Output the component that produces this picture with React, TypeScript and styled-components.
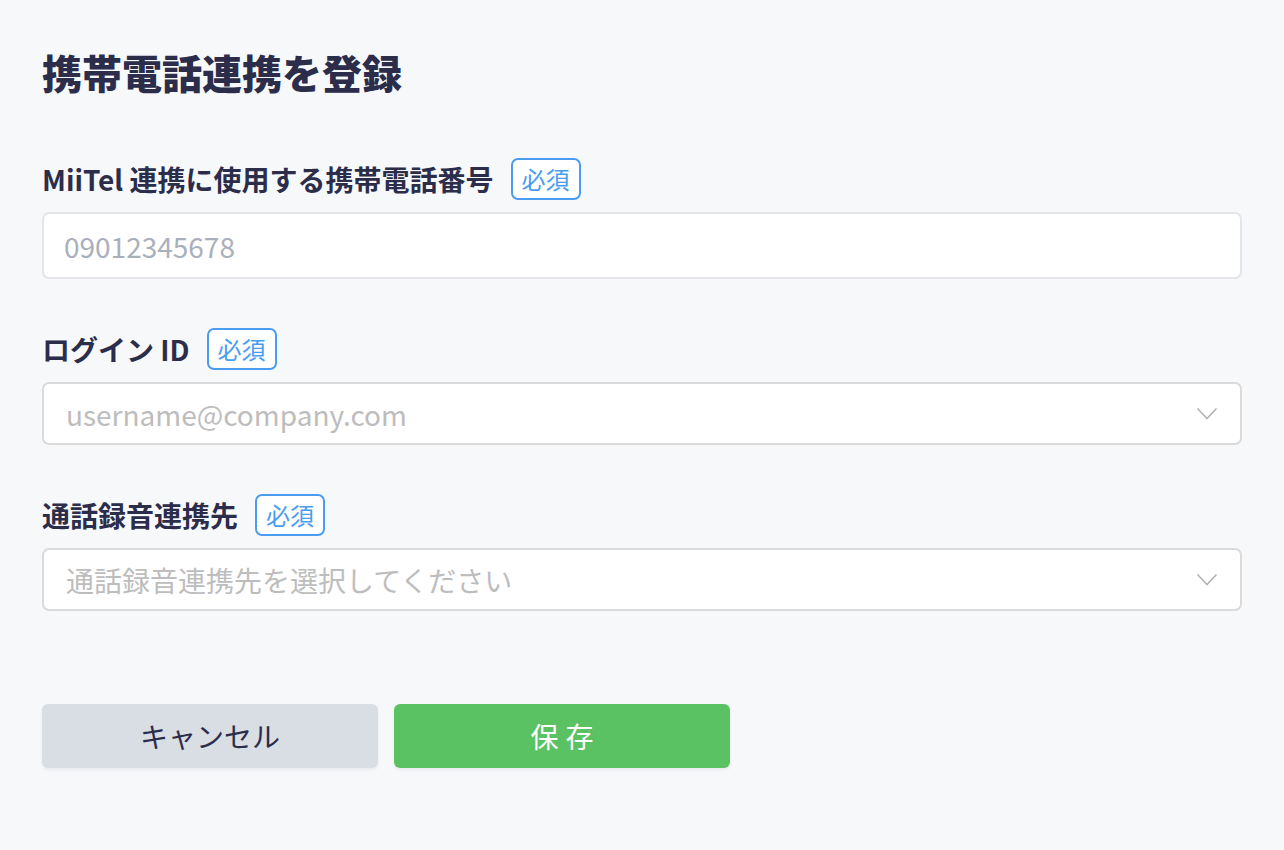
import React from "react";
import styled, { createGlobalStyle } from "styled-components";

const GlobalStyle = createGlobalStyle`
  html, body {
    margin: 0;
    padding: 0;
    background: #f7f8fa;
  }
  body {
    font-family: "Noto Sans CJK JP", "Noto Sans", sans-serif;
    color: #2b2d4a;
  }
  * {
    box-sizing: border-box;
  }
`;

const Page = styled.div`
  padding: 42px 42px 60px;
  min-height: 850px;
`;

const Title = styled.h1`
  margin: 0;
  font-size: 40px;
  line-height: 60px;
  font-weight: 900;
  color: #2b2d4a;
`;

const Form = styled.form`
  margin-top: 56px;
  display: flex;
  flex-direction: column;
  gap: 49px;
`;

const Field = styled.div`
  display: flex;
  flex-direction: column;
  gap: 12px;
`;

const LabelRow = styled.div`
  display: flex;
  align-items: center;
  gap: 17px;
  height: 42px;
`;

const Label = styled.label`
  font-size: 28px;
  font-weight: 700;
  line-height: 42px;
  color: #2b2d4a;
`;

const Required = styled.span`
  display: inline-flex;
  align-items: center;
  height: 42px;
  padding: 0 9px;
  border: 2px solid #4a9cf0;
  border-radius: 7px;
  color: #4a9cf0;
  font-size: 24px;
  line-height: 1;
  background: #fff;
`;

const TextInput = styled.input`
  width: 100%;
  height: 67px;
  padding: 0 20px;
  border: 2px solid #e3e5e9;
  border-radius: 7px;
  background: #fff;
  font-family: inherit;
  font-size: 28px;
  color: #2b2d4a;
  outline: none;

  &::placeholder {
    color: #aab0bb;
  }
`;

const SelectBox = styled.div`
  display: flex;
  align-items: center;
  justify-content: space-between;
  height: 63px;
  flex-shrink: 0;
  padding: 0 22px;
  border: 2px solid #dadada;
  border-radius: 7px;
  background: #fff;
`;

const Placeholder = styled.span`
  font-size: 28px;
  color: #bdbdbd;
  line-height: 1;
`;

const Chevron = () => (
  <svg width="22" height="14" viewBox="0 0 22 14" fill="none">
    <path d="M1.5 1.5 L11 11.5 L20.5 1.5" stroke="#b3b3b3" strokeWidth="1.6" />
  </svg>
);

const Actions = styled.div`
  display: flex;
  gap: 16px;
  margin-top: 93px;
`;

const Button = styled.button<{ $primary?: boolean }>`
  width: 336px;
  height: 64px;
  border: none;
  border-radius: 6px;
  font-family: inherit;
  font-size: 28px;
  letter-spacing: ${(p) => (p.$primary ? "7px" : "0")};
  text-indent: ${(p) => (p.$primary ? "7px" : "0")};
  background: ${(p) => (p.$primary ? "#5ac262" : "#d9dde4")};
  color: ${(p) => (p.$primary ? "#fff" : "#2b2d4a")};
  box-shadow: 0 2px 3px rgba(30, 40, 60, 0.06);
  cursor: pointer;
`;

export default function App() {
  return (
    <>
      <GlobalStyle />
      <Page>
        <Title>携帯電話連携を登録</Title>
        <Form onSubmit={(e) => e.preventDefault()}>
          <Field>
            <LabelRow>
              <Label>MiiTel 連携に使用する携帯電話番号</Label>
              <Required>必須</Required>
            </LabelRow>
            <TextInput placeholder="09012345678" />
          </Field>

          <Field>
            <LabelRow>
              <Label>ログイン ID</Label>
              <Required>必須</Required>
            </LabelRow>
            <SelectBox>
              <Placeholder>username@company.com</Placeholder>
              <Chevron />
            </SelectBox>
          </Field>

          <Field>
            <LabelRow>
              <Label>通話録音連携先</Label>
              <Required>必須</Required>
            </LabelRow>
            <SelectBox>
              <Placeholder>通話録音連携先を選択してください</Placeholder>
              <Chevron />
            </SelectBox>
          </Field>
        </Form>

        <Actions>
          <Button type="button">キャンセル</Button>
          <Button type="button" $primary>
            保存
          </Button>
        </Actions>
      </Page>
    </>
  );
}
